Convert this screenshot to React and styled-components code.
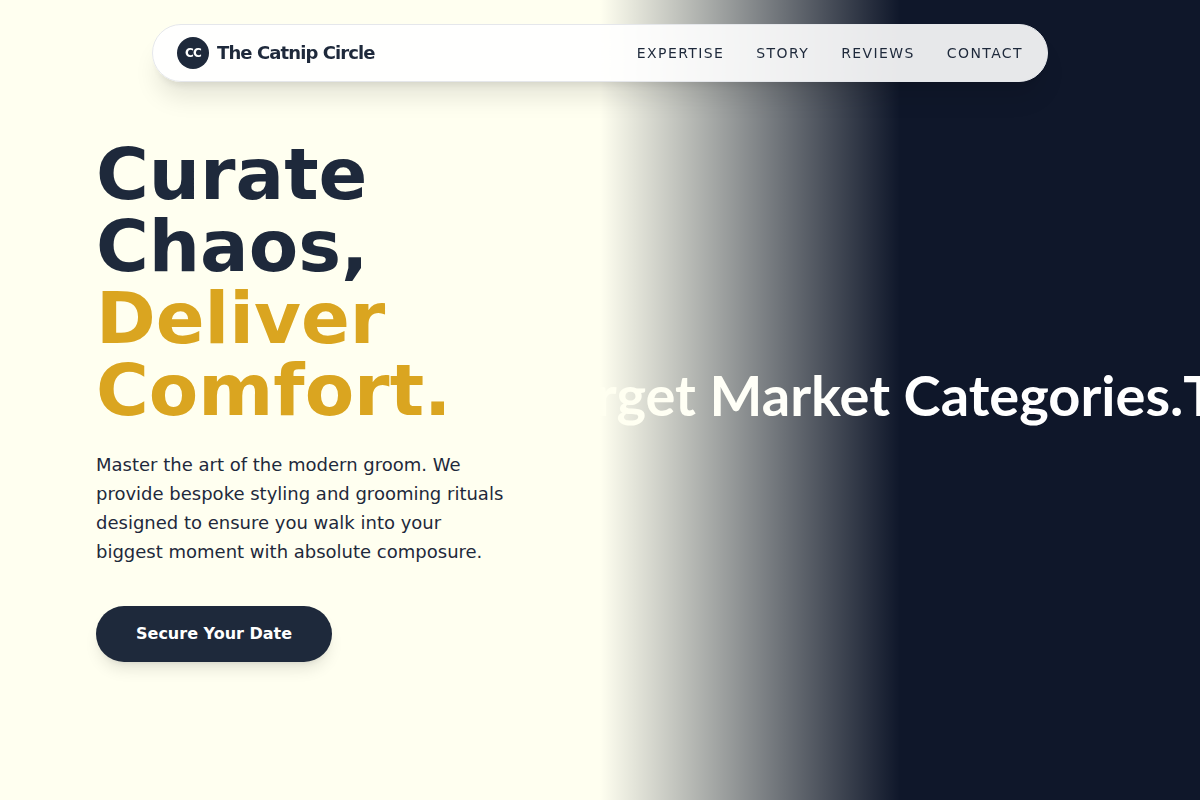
import React from "react"
import styled, { createGlobalStyle } from "styled-components"

const GlobalStyle = createGlobalStyle`
  *, *::before, *::after {
    box-sizing: border-box;
  }

  body {
    margin: 0;
    background: #fffff0;
    color: #1e293b;
    font-family: "DejaVu Sans", sans-serif;
  }
`

const Header = styled.header`
  position: fixed;
  top: 24px;
  left: 0;
  right: 0;
  z-index: 10;
  display: flex;
  justify-content: center;
  padding: 0 24px;
`

const Nav = styled.nav`
  display: flex;
  align-items: center;
  justify-content: space-between;
  width: 100%;
  max-width: 896px;
  padding: 12px 24px;
  border: 1px solid #e5e7eb;
  border-radius: 999px;
  background: rgba(255, 255, 255, 0.9);
  backdrop-filter: blur(12px);
  box-shadow: 0 20px 25px -5px rgba(0, 0, 0, 0.1), 0 8px 10px -6px rgba(0, 0, 0, 0.1);
`

const Brand = styled.a`
  display: flex;
  align-items: center;
  gap: 8px;
  color: #1e293b;
  font-size: 18px;
  font-weight: 700;
  line-height: 28px;
  letter-spacing: -0.05em;
  text-decoration: none;
`

const Badge = styled.span`
  display: flex;
  align-items: center;
  justify-content: center;
  width: 32px;
  height: 32px;
  border-radius: 50%;
  background: #1e293b;
  color: #fff;
  font-size: 12px;
  line-height: 16px;
`

const NavLinks = styled.ul`
  display: flex;
  gap: 32px;
  margin: 0;
  padding: 0;
  list-style: none;
`

const NavLink = styled.a`
  color: #1e293b;
  font-size: 14px;
  line-height: 20px;
  letter-spacing: 0.1em;
  text-transform: uppercase;
  text-decoration: none;
`

const Hero = styled.main`
  display: grid;
  grid-template-columns: 1fr 1fr;
  min-height: 100vh;
`

const Intro = styled.section`
  display: flex;
  flex-direction: column;
  justify-content: center;
  align-items: flex-start;
  padding: 96px;
`

const Title = styled.h1`
  margin: 0 0 24px;
  font-size: 72px;
  font-weight: 700;
  line-height: 72px;
`

const Highlight = styled.span`
  display: block;
  color: #daa520;
`

const Lead = styled.p`
  margin: 0 0 40px;
  max-width: 448px;
  font-size: 18px;
  line-height: 29px;
`

const BookButton = styled.button`
  padding: 16px 40px;
  border: none;
  border-radius: 999px;
  background: #1e293b;
  color: #fff;
  font-family: inherit;
  font-size: 16px;
  font-weight: 700;
  line-height: 24px;
  cursor: pointer;
  box-shadow: 0 10px 15px -3px rgba(0, 0, 0, 0.1), 0 4px 6px -4px rgba(0, 0, 0, 0.1);
`

const Showcase = styled.section`
  position: relative;
  display: flex;
  align-items: center;
  overflow: hidden;
  min-width: 0;
  background: #0f172a;

  &::after {
    content: "";
    position: absolute;
    inset: 0 50% 0 0;
    background: linear-gradient(to right, #fffff0, transparent);
  }
`

const Marquee = styled.div`
  display: flex;
  flex-shrink: 0;
  padding-bottom: 10px;
  white-space: nowrap;
  color: #fff;
  font-family: Lato, sans-serif;
  font-size: 56px;
  font-weight: 700;
  line-height: 64px;
  transform: translateX(${props => props.$offset}px);
`

const links = ["Expertise", "Story", "Reviews", "Contact"]
const phrases = ["Target Market Categories.", "Target Market Categories."]

const App = () => {
  return (
    <>
      <GlobalStyle />
      <Header>
        <Nav>
          <Brand href="#top">
            <Badge>CC</Badge>
            The Catnip Circle
          </Brand>
          <NavLinks>
            {links.map(link => (
              <li key={link}>
                <NavLink href={`#${link.toLowerCase()}`}>{link}</NavLink>
              </li>
            ))}
          </NavLinks>
        </Nav>
      </Header>
      <Hero id="top">
        <Intro>
          <Title>
            Curate Chaos, <Highlight>Deliver Comfort.</Highlight>
          </Title>
          <Lead>
            Master the art of the modern groom. We provide bespoke styling and
            grooming rituals designed to ensure you walk into your biggest
            moment with absolute composure.
          </Lead>
          <BookButton type="button">Secure Your Date</BookButton>
        </Intro>
        <Showcase>
          <Marquee $offset={-60}>
            {phrases.map((phrase, i) => (
              <span key={i}>{phrase}</span>
            ))}
          </Marquee>
        </Showcase>
      </Hero>
    </>
  )
}

export default App
